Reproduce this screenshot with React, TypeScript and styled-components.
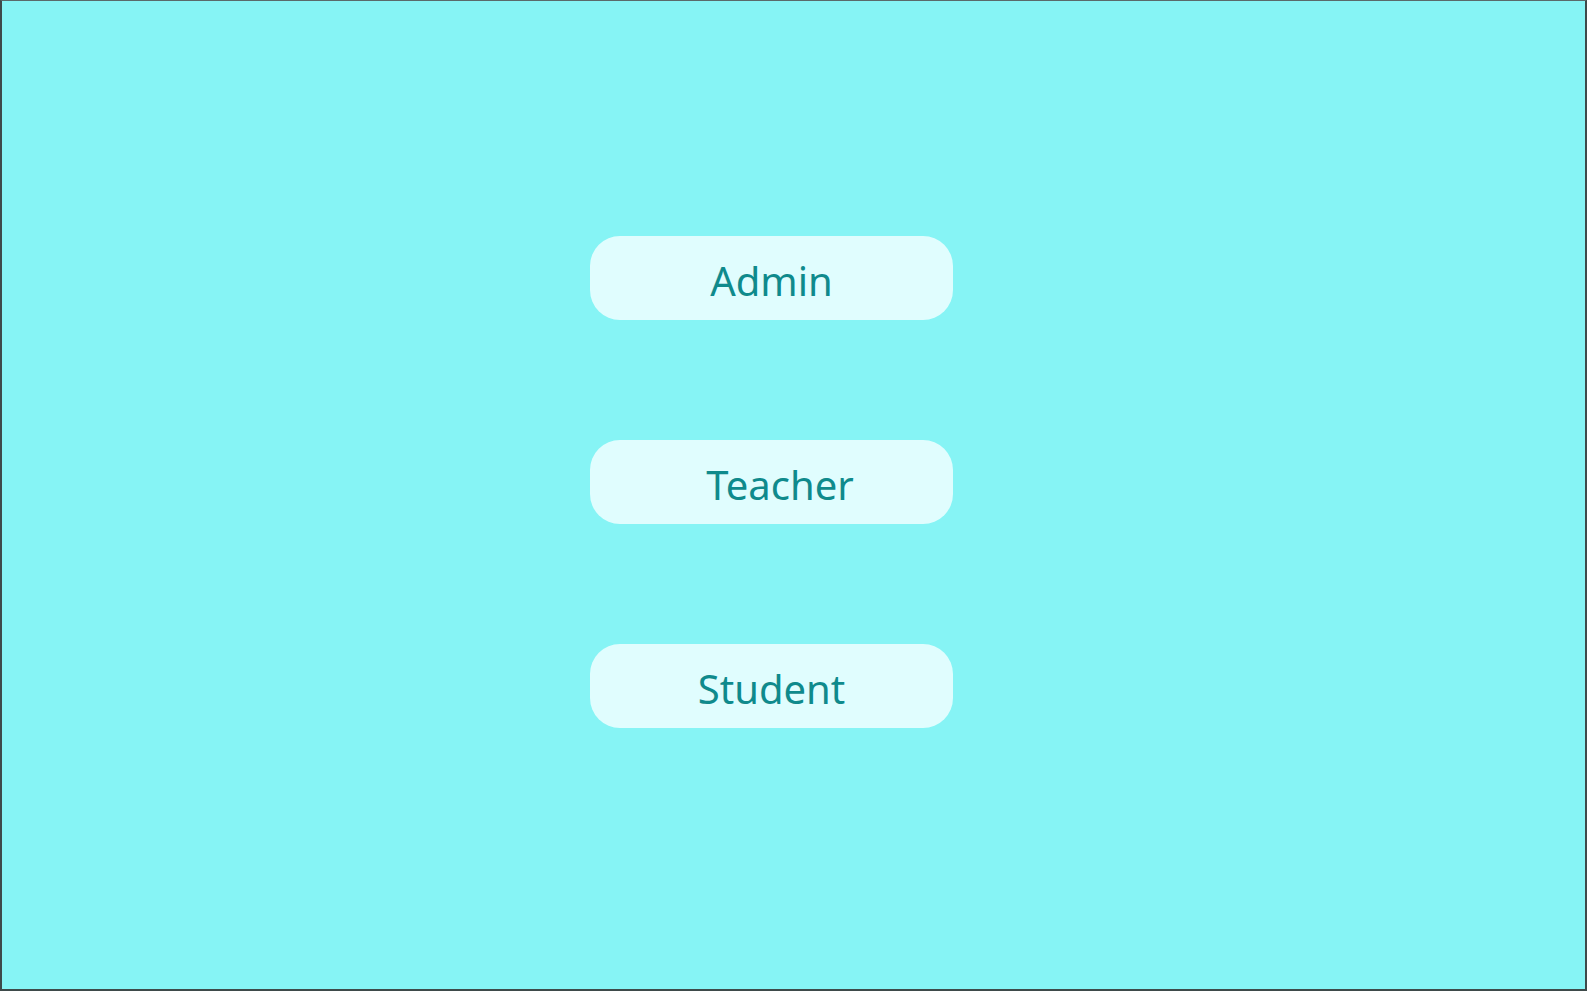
import React from "react";
import styled, { createGlobalStyle } from "styled-components";

const Global = createGlobalStyle`
  html, body { margin: 0; padding: 0; }
  body { font-family: "Noto Sans", "Open Sans", sans-serif; }
  * { box-sizing: border-box; }
`;

const Page = styled.main`
  width: 100vw;
  height: 100vh;
  background: #86f4f5;
  border-top: 1px solid #5a6a6a;
  border-left: 2px solid #3e4a4a;
  border-right: 2px solid #3e4a4a;
  border-bottom: 2px solid #3e4a4a;
  display: flex;
  flex-direction: column;
  align-items: flex-start;
  padding: 235px 0 0 588px;
  gap: 120px;
`;

const RoleButton = styled.button<{ $shift?: number }>`
  width: 363px;
  height: 84px;
  border: none;
  border-radius: 30px;
  background: #e0fdfe;
  color: #0f8a8c;
  font-family: "Noto Sans", "Open Sans", sans-serif;
  font-size: 40px;
  font-weight: 400;
  display: flex;
  align-items: center;
  justify-content: center;
  padding: 4px 0 0 ${(p) => p.$shift ?? 0}px;
  cursor: pointer;
`;

export default function App() {
  return (
    <>
      <Global />
      <Page>
        <RoleButton>Admin</RoleButton>
        <RoleButton $shift={17}>Teacher</RoleButton>
        <RoleButton>Student</RoleButton>
      </Page>
    </>
  );
}
